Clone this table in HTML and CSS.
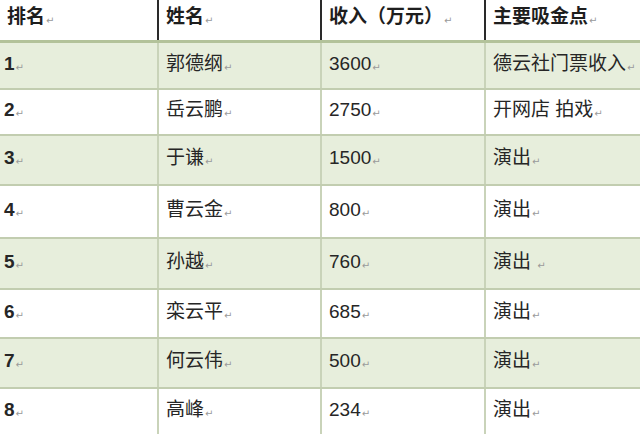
FILE: index.html
```html
<!DOCTYPE html>
<html lang="zh">
<head>
<meta charset="utf-8">
<link rel="stylesheet" href="styles.css">
</head>
<body>
<table class="rank">
  <colgroup>
    <col class="c1"><col class="c2"><col class="c3"><col class="c4">
  </colgroup>
  <thead>
    <tr class="head">
      <th>排名<span class="pm">↵</span></th>
      <th>姓名<span class="pm">↵</span></th>
      <th>收入（万元）<span class="pm">↵</span></th>
      <th>主要吸金点<span class="pm">↵</span></th>
    </tr>
  </thead>
  <tbody>
    <tr><td class="num">1<span class="pm">↵</span></td><td>郭德纲<span class="pm">↵</span></td><td>3600<span class="pm">↵</span></td><td>德云社门票收入<span class="pm">↵</span></td></tr>
    <tr><td class="num">2<span class="pm">↵</span></td><td>岳云鹏<span class="pm">↵</span></td><td>2750<span class="pm">↵</span></td><td>开网店 拍戏<span class="pm">↵</span></td></tr>
    <tr><td class="num">3<span class="pm">↵</span></td><td>于谦<span class="pm">↵</span></td><td>1500<span class="pm">↵</span></td><td>演出<span class="pm">↵</span></td></tr>
    <tr><td class="num">4<span class="pm">↵</span></td><td>曹云金<span class="pm">↵</span></td><td>800<span class="pm">↵</span></td><td>演出<span class="pm">↵</span></td></tr>
    <tr><td class="num">5<span class="pm">↵</span></td><td>孙越<span class="pm">↵</span></td><td>760<span class="pm">↵</span></td><td>演出 <span class="pm">↵</span></td></tr>
    <tr><td class="num">6<span class="pm">↵</span></td><td>栾云平<span class="pm">↵</span></td><td>685<span class="pm">↵</span></td><td>演出<span class="pm">↵</span></td></tr>
    <tr><td class="num">7<span class="pm">↵</span></td><td>何云伟<span class="pm">↵</span></td><td>500<span class="pm">↵</span></td><td>演出<span class="pm">↵</span></td></tr>
    <tr><td class="num">8<span class="pm">↵</span></td><td>高峰<span class="pm">↵</span></td><td>234<span class="pm">↵</span></td><td>演出<span class="pm">↵</span></td></tr>
  </tbody>
</table>
</body>
</html>
```
FILE: styles.css
```css
html, body {
  margin: 0;
  padding: 0;
  background: #ffffff;
}
body {
  width: 640px;
  height: 434px;
  overflow: hidden;
  font-family: "Liberation Sans", "Noto Sans CJK SC", sans-serif;
  color: #262626;
}
.rank {
  width: 640px;
  border-collapse: collapse;
  table-layout: fixed;
}
.c1 { width: 158px; }
.c2 { width: 163px; }
.c3 { width: 164px; }
.c4 { width: 155px; }

.rank th, .rank td {
  padding: 0 0 0 7px;
  text-align: left;
  vertical-align: middle;
  font-size: 19px;
  line-height: 22px;
  white-space: nowrap;
  overflow: hidden;
}
.rank th {
  font-weight: bold;
  color: #1e1e1e;
  height: 38px;
  padding-bottom: 2px;
  border-bottom: 3px solid #b3c29a;
}
.rank th + th {
  border-left: 2px solid #2a2a2a;
}
.rank td {
  border-bottom: 2px solid #c2cdb0;
}
.rank td + td {
  border-left: 2px solid #c9d3b9;
}
.rank td.num {
  font-weight: bold;
  padding-left: 4px;
}
.rank tbody tr:nth-child(odd) td {
  background: #e7eedc;
}
.rank tbody tr:nth-child(1) td { height: 45px; }
.rank tbody tr:nth-child(2) td { height: 44px; }
.rank tbody tr:nth-child(3) td { height: 48px; }
.rank tbody tr:nth-child(4) td { height: 51px; }
.rank tbody tr:nth-child(5) td { height: 49px; }
.rank tbody tr:nth-child(6) td { height: 47px; }
.rank tbody tr:nth-child(7) td { height: 48px; }
.rank tbody tr:nth-child(8) td { height: 46px; }

.pm {
  font-family: "DejaVu Sans", sans-serif;
  font-weight: normal;
  font-size: 10px;
  color: #9a9a9a;
  margin-left: 1px;
  vertical-align: -1px;
}
```
